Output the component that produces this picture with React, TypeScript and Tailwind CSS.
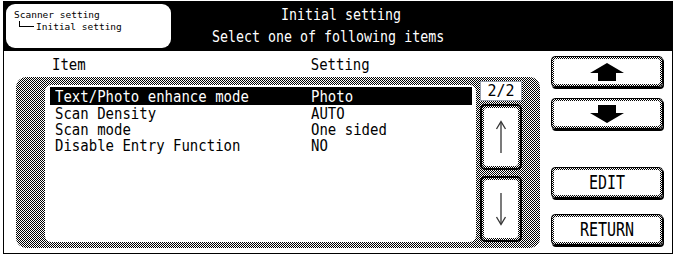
import React from "react";

const mono = { fontFamily: '"DejaVu Sans Mono", "Liberation Mono", monospace' };
const checker =
  "bg-[repeating-conic-gradient(#000_0%_25%,#fff_0%_50%)] bg-[length:2px_2px]";

function BigButton({ children }: { children: React.ReactNode }) {
  return (
    <div className={`w-[112px] h-[31px] rounded-[4px] border border-black p-[2px] shadow-[1px_2px_0_#000] ${checker}`}>
      <div className="w-full h-full bg-white rounded-[2px] flex items-center justify-center">
        {children}
      </div>
    </div>
  );
}

function ScrollButton({ dir }: { dir: "up" | "down" }) {
  return (
    <div className={`w-[42px] flex-1 rounded-[5px] border-2 border-black p-[2px] ${checker}`}>
      <div className="w-full h-full bg-white rounded-[3px] flex items-center justify-center">
        <svg width="12" height="34" viewBox="0 0 12 34">
          {dir === "up" ? (
            <>
              <line x1="6" y1="2" x2="6" y2="33" stroke="#333" strokeWidth="1.3" />
              <path d="M1.5 9 L6 1.5 L10.5 9" fill="none" stroke="#333" strokeWidth="1.3" />
            </>
          ) : (
            <>
              <line x1="6" y1="1" x2="6" y2="32" stroke="#333" strokeWidth="1.3" />
              <path d="M1.5 25 L6 32.5 L10.5 25" fill="none" stroke="#333" strokeWidth="1.3" />
            </>
          )}
        </svg>
      </div>
    </div>
  );
}

const rows = [
  ["Text/Photo enhance mode", "Photo"],
  ["Scan Density", "AUTO"],
  ["Scan mode", "One sided"],
  ["Disable Entry Function", "NO"],
];

export default function App() {
  return (
    <div className="w-[676px] h-[256px] bg-white pl-[3px] pr-[3px] pt-[1px] pb-[2px]" style={mono}>
      <div className="h-full border border-black flex flex-col">
        {/* header */}
        <div className="h-[49px] bg-black flex items-start shrink-0">
          <div className="ml-[2px] mt-[2px] w-[165px] h-[44px] bg-white rounded-[9px] pl-[8px] pt-[5px] text-black text-[9.5px] leading-[11px]">
            <div>Scanner setting</div>
            <div className="flex items-start mt-[1px]">
              <span className="inline-block ml-[5px] w-[15px] h-[6px] border-l border-b border-black" />
              <span className="ml-[2px]">Initial setting</span>
            </div>
          </div>
          <div className="ml-[41px] flex flex-col text-white text-[13.3px] leading-[16px]">
            <div className="mt-[5px] pl-[69px]">
              <span className="inline-block scale-y-115">Initial setting</span>
            </div>
            <div className="mt-[6px]">
              <span className="inline-block scale-y-115">Select one of following items</span>
            </div>
          </div>
        </div>
        {/* body */}
        <div className="flex-1 flex">
          <div className="w-[537px] flex flex-col">
            <div className="h-[26px] flex items-center text-[14px] leading-[16px] text-black">
              <span className="ml-[48px] inline-block scale-y-110">Item</span>
              <span className="ml-[225px] inline-block scale-y-110">Setting</span>
            </div>
            <div className={`ml-[12px] w-[524px] h-[171px] rounded-[10px] flex pl-[29px] pr-[18px] pt-[8px] pb-[6px] gap-[4px] ${checker}`}>
              <div className="w-[431px] h-full bg-white rounded-[6px] pt-[2px] pl-[5px] text-[14px] leading-[14px] text-black">
                {rows.map(([a, b], i) => (
                  <div
                    key={a}
                    className={`w-[422px] flex items-center pl-[5px] ${i === 0 ? "bg-black text-white h-[18px]" : "h-[16px]"}`}
                  >
                    <span className="w-[256px] inline-block scale-y-110">{a}</span>
                    <span className="inline-block scale-y-110">{b}</span>
                  </div>
                ))}
              </div>
              <div className="w-[42px] flex flex-col gap-[3px] -mt-[4px]">
                <div className="h-[20px] bg-white border border-gray-400 flex items-center justify-center text-[15px] leading-[16px] text-black">
                  <span className="inline-block scale-y-110">2/2</span>
                </div>
                <div className="flex-1 flex flex-col gap-[6px]">
                  <ScrollButton dir="up" />
                  <ScrollButton dir="down" />
                </div>
              </div>
            </div>
          </div>
          <div className="ml-[10px] flex flex-col pt-[5px]">
            <BigButton>
              <svg width="34" height="18" viewBox="0 0 34 18">
                <path d="M17 0 L34 10 L26 10 L26 18 L8 18 L8 10 L0 10 Z" fill="#000" />
              </svg>
            </BigButton>
            <div className="h-[11px]" />
            <BigButton>
              <svg width="34" height="18" viewBox="0 0 34 18">
                <path d="M8 0 L26 0 L26 8 L34 8 L17 18 L0 8 L8 8 Z" fill="#000" />
              </svg>
            </BigButton>
            <div className="h-[38px]" />
            <BigButton>
              <span className="text-[15px] leading-[16px] text-black inline-block scale-y-125">EDIT</span>
            </BigButton>
            <div className="h-[16px]" />
            <BigButton>
              <span className="text-[15px] leading-[16px] text-black inline-block scale-y-125">RETURN</span>
            </BigButton>
          </div>
        </div>
      </div>
    </div>
  );
}
